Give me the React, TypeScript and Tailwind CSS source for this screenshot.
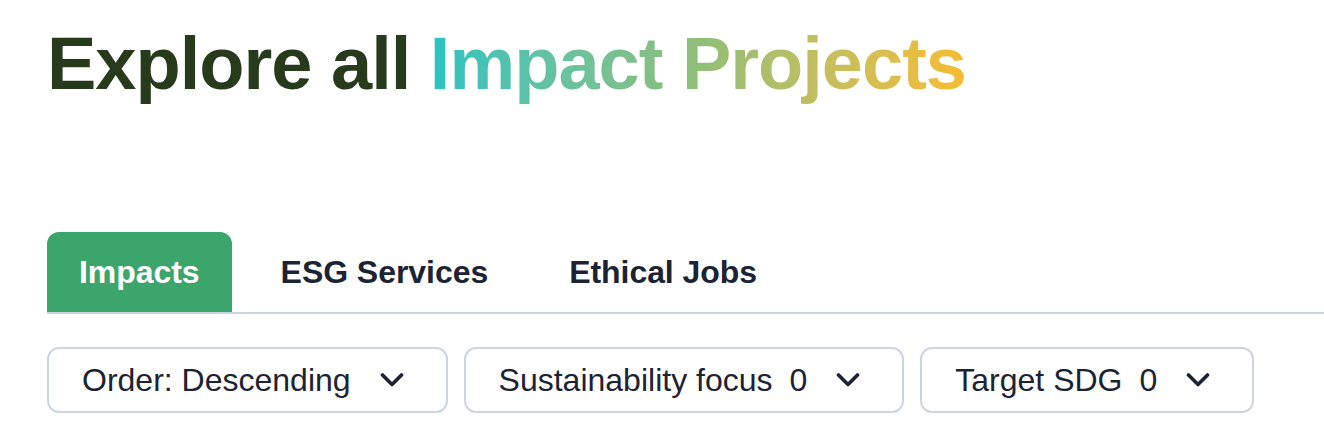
const tabs = ['Impacts', 'ESG Services', 'Ethical Jobs'];

const filters = [
  { label: 'Order: Descending', count: null },
  { label: 'Sustainability focus', count: 0 },
  { label: 'Target SDG', count: 0 },
];

function Chevron() {
  return (
    <svg width="24" height="16" viewBox="0 0 24 16" fill="none" className="ml-[29px] shrink-0">
      <polyline points="2.5,3 12,12.5 21.5,3" stroke="#1c2333" strokeWidth="3.6" strokeLinecap="round" strokeLinejoin="round" />
    </svg>
  );
}

export default function App() {
  return (
    <div className="min-h-screen bg-white pl-[47px] pt-[20px] font-['Liberation_Sans',Arial,sans-serif]">
      {/* Heading */}
      <h1 className="text-[74px] font-bold leading-[88px] tracking-[-1px] text-[#283a1c]">
        Explore all{' '}
        <span className="bg-gradient-to-r from-[#25c3c2] via-[#8fbe78] to-[#f7bc30] bg-clip-text text-transparent">
          Impact Projects
        </span>
      </h1>

      {/* Tabs */}
      <div className="mt-[124px] flex items-end gap-[17px] border-b-2 border-[#cbd5e1]">
        {tabs.map((tab, i) => (
          <button
            key={tab}
            className={`h-[80px] rounded-t-[12px] px-[32px] text-[32px] font-bold tracking-[-0.05px] ${
              i === 0 ? 'bg-[#3ba56c] text-white' : 'text-[#1c2333]'
            }`}
          >
            {tab}
          </button>
        ))}
      </div>

      {/* Filters */}
      <div className="mt-[33px] flex gap-[16px]">
        {filters.map((f) => (
          <button
            key={f.label}
            className="flex h-[66px] items-center rounded-[12px] border-2 border-[#cbd5e1] pl-[33px] pr-[42px] text-[32px] text-[#1c2333]"
          >
            <span>{f.label}</span>
            {f.count !== null && <span className="ml-[17px]">{f.count}</span>}
            <Chevron />
          </button>
        ))}
      </div>
    </div>
  );
}
